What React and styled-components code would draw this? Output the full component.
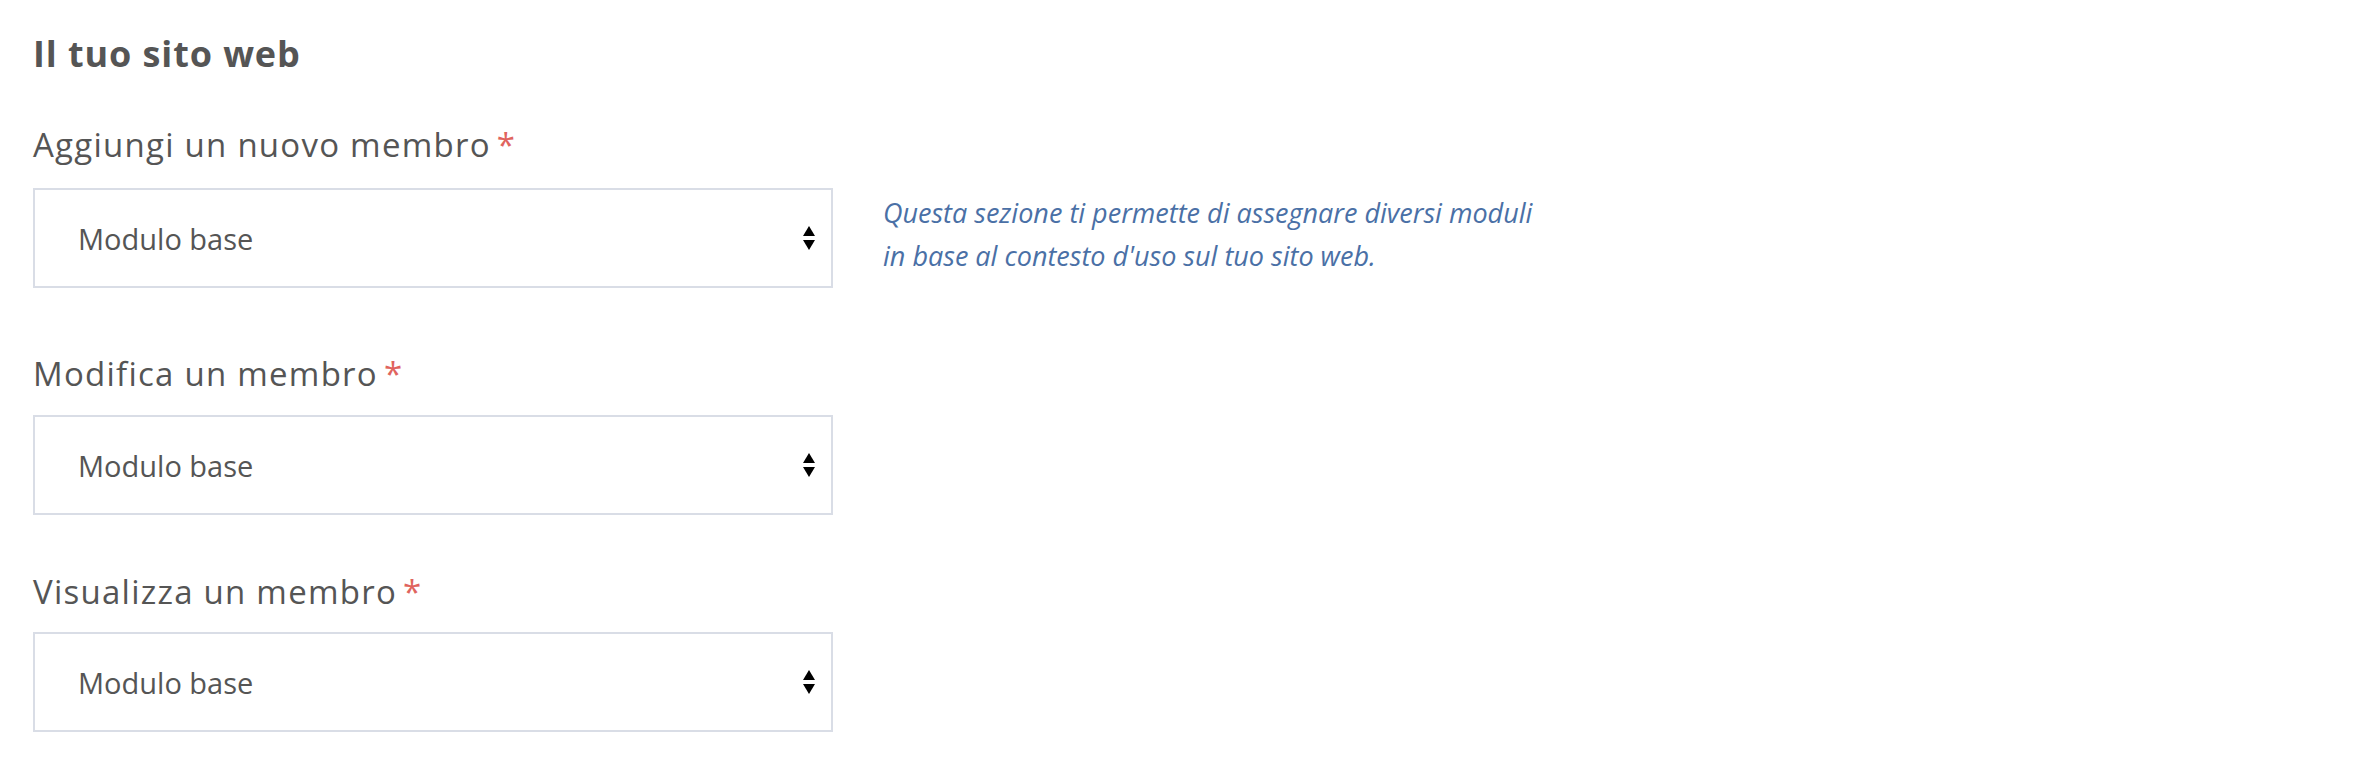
import styled, { createGlobalStyle } from "styled-components"

const Global = createGlobalStyle`
    body {
        margin: 0;
        background: #fff;
        font-family: "Open Sans", "Noto Sans", sans-serif;
        color: #555;
    }
`

const Page = styled.div`
    padding: 33px 33px 0;
`

const Title = styled.h2`
    margin: 0;
    font-size: 36px;
    line-height: 42px;
    font-weight: 700;
    letter-spacing: 0.9px;
    color: #555;
`

const Field = styled.div`
    margin-top: ${({ $top }) => $top}px;
`

const Label = styled.label`
    display: block;
    font-size: 33px;
    line-height: 40px;
    letter-spacing: 1.25px;
    color: #555;
    margin-bottom: ${({ $gap }) => $gap}px;
`

const Star = styled.span`
    color: #e0645e;
    margin-left: 6px;
`

const Row = styled.div`
    display: flex;
    align-items: flex-start;
    gap: 50px;
`

const SelectWrap = styled.div`
    position: relative;
    width: 800px;
    flex: none;
`

const Select = styled.select`
    appearance: none;
    -webkit-appearance: none;
    display: block;
    width: 100%;
    height: 100px;
    box-sizing: border-box;
    border: 2px solid #d9dde6;
    border-radius: 0;
    background: #fff;
    padding: 0 60px 0 43px;
    font-family: "Open Sans", "Noto Sans", sans-serif;
    font-size: 29px;
    color: #555;
    outline: none;
`

const Arrows = styled.svg`
    position: absolute;
    right: 18px;
    top: 50%;
    transform: translateY(-50%);
    pointer-events: none;
`

const Help = styled.p`
    margin: 3px 0 0;
    font-size: 27px;
    line-height: 43px;
    font-style: italic;
    color: #4a70a6;
`

const SortIcon = () => (
    <Arrows width="12" height="24" viewBox="0 0 12 24">
        <path d="M6 0 L12 10 L0 10 Z" fill="#000" />
        <path d="M0 14 L12 14 L6 24 Z" fill="#000" />
    </Arrows>
)

const Dropdown = ({ id }) => (
    <SelectWrap>
        <Select id={id} defaultValue="base">
            <option value="base">Modulo base</option>
        </Select>
        <SortIcon />
    </SelectWrap>
)

const App = () => {
    return (
        <Page>
            <Global />
            <Title>Il tuo sito web</Title>
            <Field $top={50}>
                <Label htmlFor="add" $gap={23}>Aggiungi un nuovo membro<Star>*</Star></Label>
                <Row>
                    <Dropdown id="add" />
                    <Help>
                        Questa sezione ti permette di assegnare diversi moduli<br />
                        in base al contesto d'uso sul tuo sito web.
                    </Help>
                </Row>
            </Field>
            <Field $top={66}>
                <Label htmlFor="edit" $gap={21}>Modifica un membro<Star>*</Star></Label>
                <Dropdown id="edit" />
            </Field>
            <Field $top={57}>
                <Label htmlFor="view" $gap={20}>Visualizza un membro<Star>*</Star></Label>
                <Dropdown id="view" />
            </Field>
        </Page>
    )
}

export default App
